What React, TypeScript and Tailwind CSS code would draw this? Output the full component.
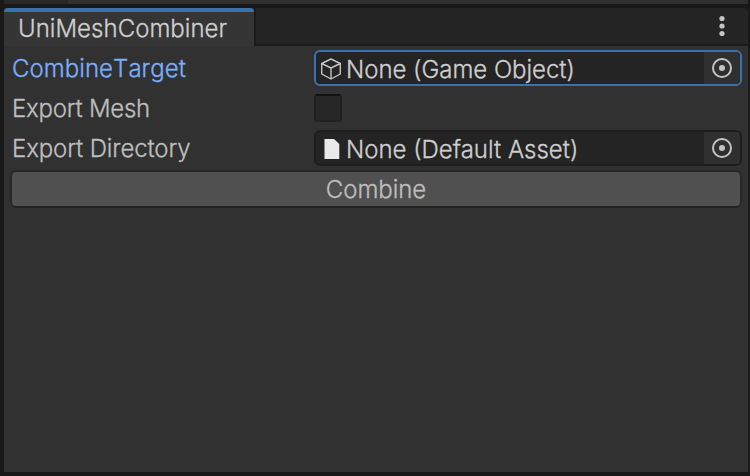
import React from 'react';

const text = "whitespace-nowrap text-[24px] font-light leading-[30px] [-webkit-text-stroke:0.3px_currentColor]";

function Picker() {
  return (
    <span className="flex h-full w-[36px] shrink-0 items-center justify-center bg-[#303030]">
      <svg width="22" height="22" viewBox="0 0 22 22" fill="none">
        <circle cx="11" cy="11" r="9" stroke="#c4c4c4" strokeWidth="2" />
        <circle cx="11" cy="11" r="3" fill="#c4c4c4" />
      </svg>
    </span>
  );
}

export default function App() {
  return (
    <div className="h-[476px] w-[750px] overflow-hidden bg-[#191919] font-['Inter',sans-serif]">
      <div className="mb-1 ml-1 flex h-1 w-[744px] bg-[#303030]">
        <div className="h-1 w-16 bg-[#282828]" />
      </div>
      <div className="ml-1 flex h-[464px] w-[744px] flex-col overflow-hidden rounded-tr-[6px] bg-[#313131]">
        <header className="flex h-[38px] shrink-0 justify-between bg-[#242424]">
          <div className="h-[38px] w-[250px] shrink-0 overflow-hidden rounded-t-[4px] bg-[#353535]">
            <div className="h-1 bg-[#3a72b0]" />
            <div className={text + " pl-[14px] pt-[2px] tracking-[0.03px] text-[#cecece]"}>UniMeshCombiner</div>
          </div>
          <div className="flex h-[38px] flex-1 justify-end border-b-2 border-l-2 border-[#1b1b1b]">
            <svg className="mr-[14px] mt-[6px]" width="24" height="26" viewBox="0 0 24 26" fill="#c4c4c4">
              <circle cx="12" cy="4.5" r="2.6" /><circle cx="12" cy="12" r="2.6" /><circle cx="12" cy="19.5" r="2.6" />
            </svg>
          </div>
        </header>
        <div className="flex flex-col gap-1 pl-2 pr-1.5 pt-1">
          <div className="flex h-9 items-center">
            <span className={text + " w-[302px] shrink-0 pt-0.5 tracking-[0.05px] text-[#7baefa] [font-kerning:none]"}>CombineTarget</span>
            <div className="flex h-9 w-[428px] shrink-0 items-center overflow-hidden rounded-[6px] border-2 border-[#3a72b0] bg-[#242424]">
              <svg className="ml-1 mr-1 mt-0.5" width="22" height="24" viewBox="0 0 22 24" fill="none" stroke="#c4c4c4" strokeWidth="1.4" strokeLinejoin="round"><path d="M11 2 20.3 6.5v10.5L11 22l-9.3-5V6.5zM1.700 6.500l9.300 4.500 9.300-4.500M11 11v11" /></svg>
              <span className={text + " flex-1 pt-1 tracking-[-0.03px] text-[#cecece]"}>None (Game Object)</span>
              <Picker />
            </div>
          </div>
          <div className="flex h-9 items-center">
            <span className={text + " w-[302px] shrink-0 pt-0.5 tracking-[-0.24px] text-[#bebebe]"}>Export Mesh</span>
            <span className="h-7 w-7 rounded-[4px] border-2 border-[#202020] border-t-[#111111] bg-[#272727]" />
          </div>
          <div className="flex h-9 items-center">
            <span className={text + " w-[302px] shrink-0 pt-0.5 tracking-[-0.13px] text-[#bebebe]"}>Export Directory</span>
            <div className="flex h-9 w-[428px] shrink-0 items-center overflow-hidden rounded-[6px] border-2 border-[#1d1d1d] bg-[#242424]">
              <svg className="ml-1 mr-1 mt-0.5" width="22" height="24" viewBox="0 0 22 24" fill="#eaeaea"><path d="M4.500 2h9.500l5.300 5v15H4.500z" /></svg>
              <span className={text + " flex-1 pt-1 text-[#cecece]"}>None (Default Asset)</span>
              <Picker />
            </div>
          </div>
          <button className={text + " -ml-0.5 h-[38px] w-[732px] rounded-[6px] border-2 border-[#282828] border-b-[#222222] bg-[#505050] pt-px text-[#bebebe] tracking-[-0.05px]"}>Combine</button>
        </div>
      </div>
    </div>
  );
}
